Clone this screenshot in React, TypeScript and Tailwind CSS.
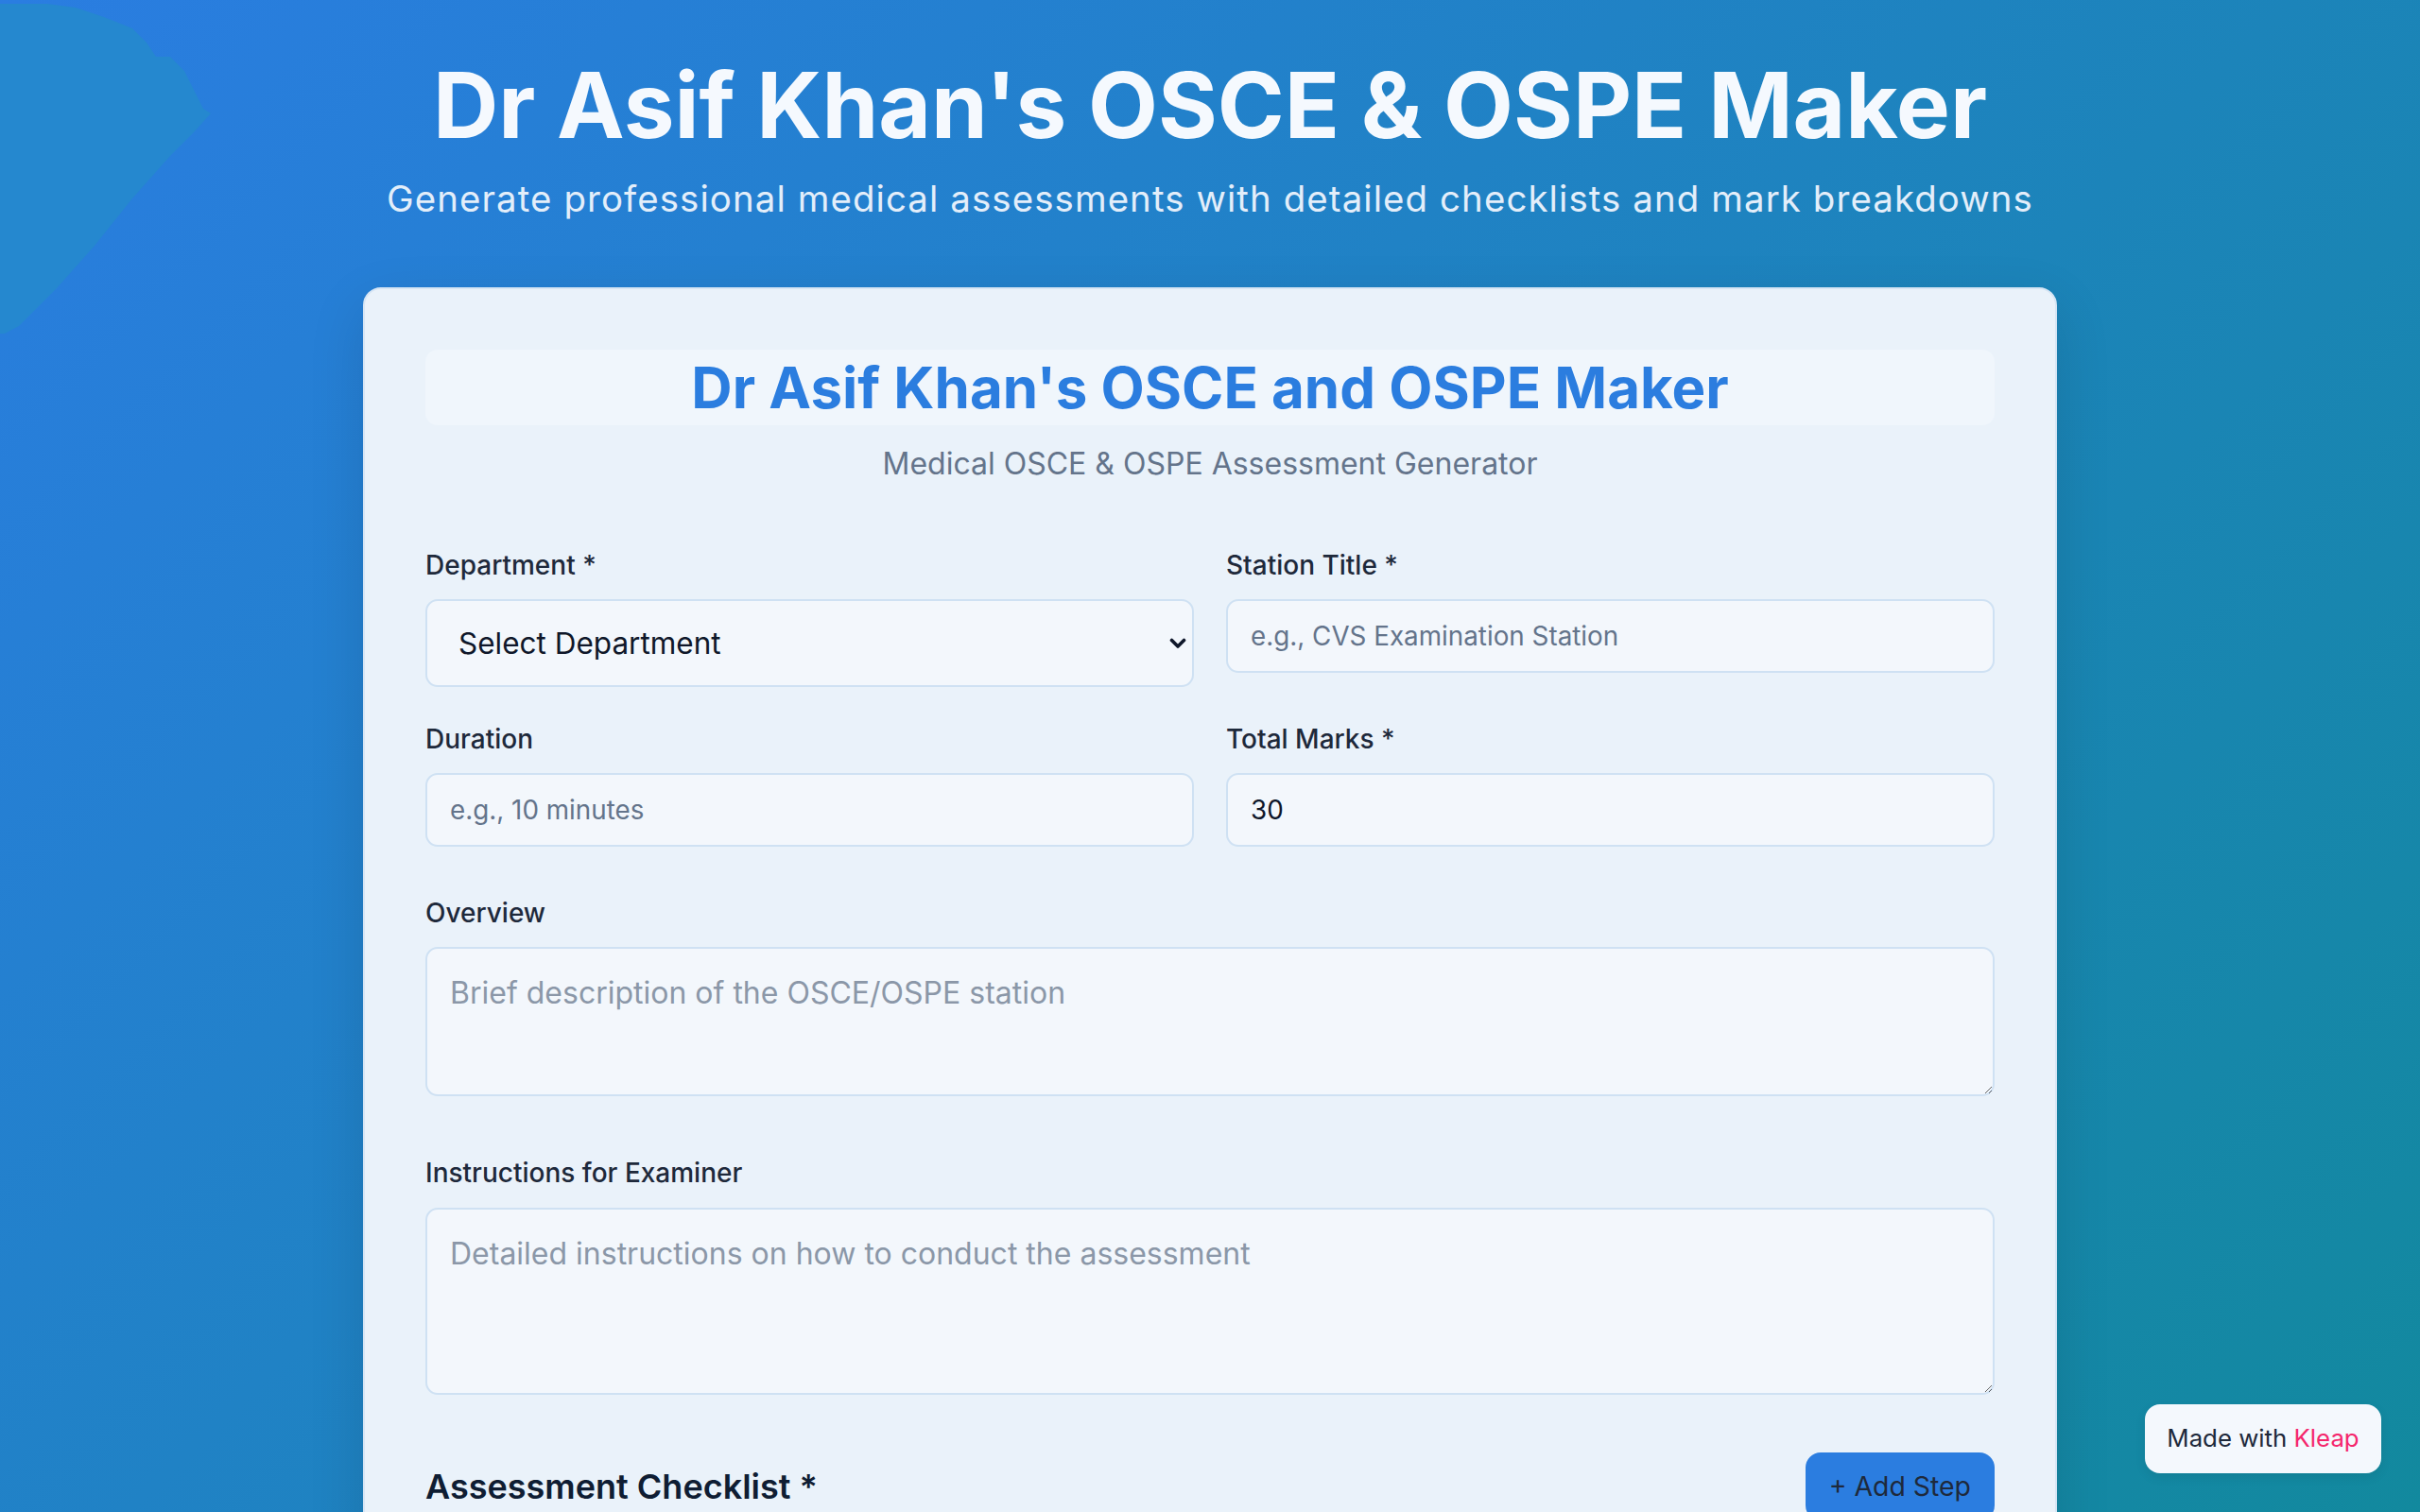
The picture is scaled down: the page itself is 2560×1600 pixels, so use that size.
import React from "react";

function Label({ children, mb = "mb-[17px]" }: { children: React.ReactNode; mb?: string }) {
  return (
    <label className={`${mb} block text-[28px] font-medium leading-[38px] text-[#1e293b]`}>
      {children}
    </label>
  );
}

export default function App() {
  return (
    <div className="relative h-screen w-full overflow-hidden bg-[linear-gradient(135deg,#2a7de1_0%,#12899e_100%)] font-['Inter',sans-serif]">
      <svg
        className="absolute left-0 top-0"
        width="230"
        height="360"
        viewBox="0 0 230 360"
      >
        <path
          d="M0 4 L50 4 L80 8 L110 18 L140 30 L155 45 L165 60 L180 60 L195 75 L205 95 L215 115 L223 120 L205 140 L180 165 L140 210 L100 260 L60 305 L20 345 L5 353 L0 353 Z"
          fill="#2588cf"
        />
      </svg>

      <div className="relative flex flex-col items-center pt-[54px]">
        <h1 className="text-[96px] font-bold leading-[115px] text-[#f5f9fe]">
          Dr Asif Khan's OSCE &amp; OSPE Maker
        </h1>
        <p className="mt-[12px] text-[38.4px] leading-[58px] tracking-[1.1px] text-[#e3eefa]">
          Generate professional medical assessments with detailed checklists and mark breakdowns
        </p>

        <div className="mt-[65px] w-[1792px] rounded-[19px] border-2 border-[#d6e5f4] bg-[#eaf2fa] px-16 pt-16 pb-[300px] shadow-[0_20px_60px_rgba(0,0,0,0.12)]">
          <div className="flex h-[80px] items-center justify-center rounded-[13px] bg-[#f0f6fc]">
            <h2 className="text-[60px] font-bold leading-[80px] text-[#2b7ddf]">
              Dr Asif Khan's OSCE and OSPE Maker
            </h2>
          </div>
          <p className="mt-[17px] text-center text-[32px] leading-[48px] text-[#64748b]">
            Medical OSCE &amp; OSPE Assessment Generator
          </p>

          <div className="mt-[64px] grid grid-cols-2 gap-x-[34px] gap-y-[36px]">
            <div>
              <Label>Department *</Label>
              <div className="relative">
                <select className="h-[93px] w-full appearance-none rounded-[13px] border-2 border-[#cfe1f3] bg-[#f3f7fc] pl-[33px] text-[31.5px] text-[#0f172a] outline-none">
                  <option>Select Department</option>
                </select>
                <svg
                  className="pointer-events-none absolute right-[8px] top-[41px]"
                  width="18"
                  height="12"
                  viewBox="0 0 18 12"
                >
                  <path
                    d="M2.5 2.5 L9 9 L15.5 2.5"
                    fill="none"
                    stroke="#0f172a"
                    strokeWidth="3.6"
                    strokeLinecap="round"
                    strokeLinejoin="round"
                  />
                </svg>
              </div>
            </div>
            <div>
              <Label>Station Title *</Label>
              <input
                className="h-[78px] w-full rounded-[13px] border-2 border-[#cfe1f3] bg-[#f3f7fc] px-[24px] text-[27.8px] text-[#0f172a] outline-none placeholder:text-[#64748b]"
                placeholder="e.g., CVS Examination Station"
              />
            </div>
            <div>
              <Label>Duration</Label>
              <input
                className="h-[78px] w-full rounded-[13px] border-2 border-[#cfe1f3] bg-[#f3f7fc] px-[24px] text-[27.8px] text-[#0f172a] outline-none placeholder:text-[#64748b]"
                placeholder="e.g., 10 minutes"
              />
            </div>
            <div>
              <Label>Total Marks *</Label>
              <input
                className="h-[78px] w-full rounded-[13px] border-2 border-[#cfe1f3] bg-[#f3f7fc] px-[24px] text-[27.8px] text-[#0f172a] outline-none placeholder:text-[#64748b]"
                defaultValue="30"
              />
            </div>
          </div>

          <div className="mt-[51px]">
            <Label>Overview</Label>
            <textarea
              className="block h-[158px] w-full rounded-[13px] border-2 border-[#cfe1f3] bg-[#f3f7fc] px-[24px] pt-[25px] text-[32px] leading-[43px] text-[#0f172a] outline-none placeholder:text-[#8b97a8]"
              placeholder="Brief description of the OSCE/OSPE station"
            />
          </div>

          <div className="mt-[62px]">
            <Label mb="mb-[18px]">Instructions for Examiner</Label>
            <textarea
              className="block h-[198px] w-full rounded-[13px] border-2 border-[#cfe1f3] bg-[#f3f7fc] px-[24px] pt-[25px] text-[32px] leading-[43px] text-[#0f172a] outline-none placeholder:text-[#8b97a8]"
              placeholder="Detailed instructions on how to conduct the assessment"
            />
          </div>

          <div className="mt-[61px] flex items-center justify-between">
            <h3 className="text-[36px] font-semibold leading-[48px] text-[#0f1d33]">
              Assessment Checklist *
            </h3>
            <button className="h-[72px] rounded-[16px] bg-[#2b7de0] px-[25px] text-[28.4px] text-[#1e293b]">
              + Add Step
            </button>
          </div>
        </div>
      </div>

      <div className="absolute bottom-[41px] right-[41px] flex h-[73px] w-[250px] items-center justify-center rounded-[16px] bg-[#f4f8fd] text-[25.8px] text-[#1e293b] shadow-[0_4px_12px_rgba(0,0,0,0.08)]">
        <span>
          Made with <span className="text-[#f5266c]">Kleap</span>
        </span>
      </div>
    </div>
  );
}
